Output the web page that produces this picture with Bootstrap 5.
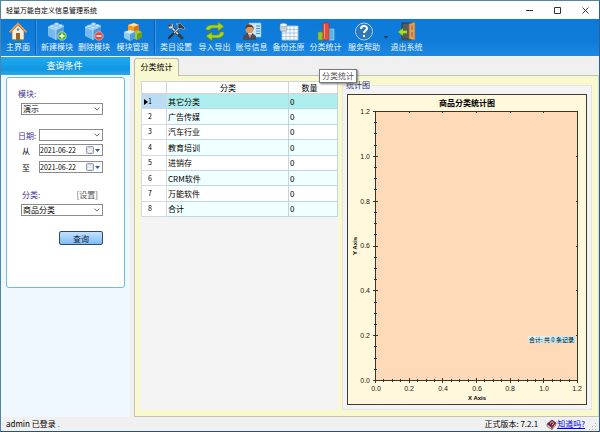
<!DOCTYPE html>
<html lang="zh-CN">
<head>
<meta charset="utf-8">
<meta name="viewport" content="width=device-width, initial-scale=1">
<title>轻量万能自定义信息管理系统</title>
<link href="https://cdn.jsdelivr.net/npm/bootstrap@5.3.0/dist/css/bootstrap.min.css" rel="stylesheet">
<style>
body{font-family:"Noto Sans CJK SC","Liberation Sans",sans-serif;font-size:8px;line-height:12px;color:#000;background:#f0f0f0}
.window{border:1px solid #4f86a4;border-right-color:#2c5f9c;border-bottom-color:#2b5268}
.titlebar{height:18px;background:#fff;padding:0 5px;font-size:7px}
.win-btns{gap:18px;padding-right:4px}
.win-btns button,.tool,.datebox button{border:0;background:none;padding:0;color:inherit;line-height:inherit;font-size:inherit}
.win-btns button{width:10px;height:12px;display:flex;align-items:center;justify-content:center}
.toolbar{height:37px;background:linear-gradient(#0c7ad8,#0f7cda 60%,#1c88e2)}
.tool{height:36px;width:37px;display:flex;flex-direction:column;align-items:center;padding-top:3px;white-space:nowrap;color:#eaf4fe}
.tool svg{width:20px;height:19px;display:block}
.tool-s{width:34px}.tool-l{width:40px}.tool-xl{width:43px}
.vsep{width:2px;background:#0c5fb4;border-right:1px solid #3a97e8;margin:1px 0}
.side{width:129px;background:#eff7ff;padding-top:1px}
.side-title{height:18px;background:linear-gradient(#1eaaf0,#1296e2 70%,#2ba8ee);color:#fff;font-size:9px;line-height:18px;padding-right:2px}
.filter{border:1px solid #6fb9e2;border-radius:3px;background:#fff;margin:2px 5px 0 5px;height:211px;padding:10px 21px 0 11px}
.filter label{color:#43308c;line-height:11px;font-size:8px}
.filter .plain{color:#000;width:21px;padding-left:4px}
.filter .lab{width:21px}
.field,.datebox{height:12px;border:1px solid #8c8c8c;border-radius:0;background-color:#fff;color:#000;font-size:8px;line-height:10px;padding:0 12px 0 1px;min-height:0}
.field{background-position:right 2px center;background-size:6px 6px}
.datebox{padding:0 2px 0 0}
.datebox input{border:0;padding:0;min-width:0;width:42px;font-size:7px;line-height:10px;height:10px;color:#000;outline:0}
.datebox button{height:10px;display:flex;align-items:center}
.mod-sel{margin:4px 0 0 3px;width:82px}
.day-row{margin-top:14px}.date-row{margin-top:3px}.date-row2{margin-top:5px}
.cat-row{margin-top:16px;padding-left:4px;padding-right:5px}
.set-link{color:#555;font-size:8px;line-height:11px}
.cat-sel{margin:4px 0 0 3px;width:82px}
.btn-row{margin-top:15px;line-height:0}
.query-btn{width:44px;height:14px;border:1px solid #33495e;border-radius:2px;padding:0;font-size:8px;line-height:11px;background:linear-gradient(#c4e1fd,#7fbcf8);color:#0c1c30}
.tabs-wrap{padding:2px 0 0 4px;background:#f0f0f0}
.page-tab{height:18px;width:45px;margin-bottom:-1px;border:1px solid #b9b9a8;border-bottom:0;border-radius:3px 3px 0 0;background:#f9f9d0;font-size:8px;line-height:13px;padding:0 0 2px;color:#000;position:relative;z-index:1}
.page{background:#f9f9d0;border:1px solid #c3c3ae;border-right-color:#dcdcc0;padding:5px 6px 6px 5px}
.grid-pane{width:198px;background:#f4f4f4;padding-left:1px}
.grid{width:197px;height:136px;table-layout:fixed;font-size:8px;line-height:11px;border-collapse:collapse;border:1px solid #bfcbd8;background:#fff}
.grid th,.grid td{padding:0 0 0 1px;border:1px solid #bcd6e6;overflow:hidden;white-space:nowrap;vertical-align:middle}
.grid thead th{font-weight:400;text-align:center;height:12px;border-color:#d4d4d4}
.grid tbody th{font-weight:400;font-size:7px;text-align:left;padding-left:6px;border-color:#d4dae0}
.grid tbody tr:nth-child(even) td{background:#f0ffff}
.grid tbody tr.active-row td{background:#afeeee}
.grid tbody tr.active-row th{background:#bcdcf4;padding-left:2px}
.col-no{width:25px}.col-num{width:49px}
.group{background:#f4f4f4;border:1px solid #e4e4e4;margin:4px 0 0 4px;padding:8px 4px 4px}
.group h2{font-size:8px;line-height:10px;margin:-14px 0 0 -1px;color:#27278a;font-weight:400}
.chart{display:block;width:100%;margin-top:4px;background:#fff8dc;border:1px solid #3c3c34}
.tip{position:absolute;left:318px;top:68px;background:#fff;border:1px solid #7a7a7a;box-shadow:1px 1px 2px #777;color:#555;font-size:8px;line-height:12px;padding:0 2px;z-index:5;white-space:nowrap}
.status{height:14px;background:#f0f0f0;padding:0 2px 0 5px;font-size:8px;line-height:14px}
.status a{color:#00e}
</style>
<script src="https://cdn.jsdelivr.net/npm/bootstrap@5.3.0/dist/js/bootstrap.bundle.min.js"></script>
</head>
<body>
<div class="window d-flex flex-column min-vh-100 position-relative">
<header class="titlebar d-flex align-items-center justify-content-between">
  <span>轻量万能自定义信息管理系统</span>
  <div class="win-btns d-flex">
    <button type="button" aria-label="最小化"><svg width="7" height="7" stroke="#333"><path d="M0 3.5h7"/></svg></button>
    <button type="button" aria-label="最大化"><svg width="7" height="7" stroke="#333" fill="none"><path d="M.5.5h6v6h-6z"/></svg></button>
    <button type="button" aria-label="关闭"><svg width="7" height="7" stroke="#333"><path d="M.5.5l6 6M6.500.5l-6 6"/></svg></button>
  </div>
</header>
<svg width="0" height="0" class="position-absolute" aria-hidden="true">
  <symbol id="cube" viewBox="0 0 20 19"><path d="M1 5l9-4 7 3v9l-8 5-8-4z" fill="#75b9ee"/><path d="M1 5l9-4 7 3-8 4z" fill="#b5ddfa"/><path d="M9 8l8-4v9l-8 5z" fill="#4b9ade"/><path d="M1 5l8 3v10M9 8l8-4" fill="none" stroke="#d3ecff" stroke-width=".7"/><g fill="#d3edff" stroke="#62a8df" stroke-width=".6"><ellipse cx="9.500" cy="2" rx="2.300" ry="1.300"/><ellipse cx="5" cy="4.200" rx="2.200" ry="1.300"/><ellipse cx="13.500" cy="3.700" rx="2.200" ry="1.300"/><ellipse cx="9" cy="5.900" rx="2.200" ry="1.300"/></g></symbol>
</svg>
<nav class="toolbar d-flex" aria-label="工具栏">
  <button type="button" class="tool tool-s"><svg viewBox="0 0 20 19"><path d="M4 9v9h12V9l-6-6z" fill="#f8eed6" stroke="#8a6a42" stroke-width=".6"/><path d="M1.500 10.500L10 2l8.500 8.500" fill="none" stroke="#c9823d" stroke-width="2.300"/><path d="M2 9.500L10 1.500l8 8" fill="none" stroke="#f2c689" stroke-width=".8"/><path d="M8 11h4v7H8z" fill="#9d6131"/><circle cx="10" cy="7.500" r="1.300" fill="#518cc5"/><path d="M4 18h12" stroke="#578b35"/></svg>主界面</button>
  <div class="vsep"></div>
  <button type="button" class="tool tool-l"><svg viewBox="0 0 20 19"><use href="#cube"/><circle cx="15" cy="14" r="4.200" fill="#50aa2e" stroke="#d8f1ca" stroke-width=".7"/><path d="M12.500 14h5M15 11.500v5" stroke="#fff" stroke-width="1.500"/></svg>新建模块</button>
  <button type="button" class="tool tool-s"><svg viewBox="0 0 20 19"><use href="#cube"/><circle cx="15" cy="14" r="4.200" fill="#e1483d" stroke="#f8bdb6" stroke-width=".7"/><path d="M12.500 14h5" stroke="#fff" stroke-width="1.600"/></svg>删除模块</button>
  <button type="button" class="tool tool-xl"><svg viewBox="0 0 20 19"><path d="M5 3l6-2 5 2v6l-5 3-6-2z" fill="#f39b27"/><path d="M5 3l6-2 5 2-5 2z" fill="#ffd27e"/><path d="M11 5l5-2v6l-5 3z" fill="#d87516"/><path d="M10 10l5-2 4 2v5l-5 3-4-2z" fill="#9fc73a"/><path d="M14 12l5-2v5l-5 3z" fill="#6b9d20"/><path d="M1 10l6-2 5 2v6l-5 3-6-3z" fill="#91ccf4"/><path d="M1 10l6-2 5 2-5 2z" fill="#d0edff"/><path d="M7 12l5-2v6l-5 3z" fill="#509ede"/><g fill="#ffebbd"><ellipse cx="9" cy="3" rx="1.500" ry=".8"/><ellipse cx="12" cy="2.800" rx="1.500" ry=".8"/></g></svg>模块管理</button>
  <div class="vsep"></div>
  <button type="button" class="tool tool-l"><svg viewBox="0 0 20 19"><path d="M4 4l11 11 1 1" stroke="#353c46" stroke-width="3" stroke-linecap="round"/><path d="M4 4l8 8" stroke="#e1e8ef" stroke-width="1.600"/><path d="M1 4l3 3 3-1V2L5 1l1 3-2 1z" fill="#f3f4f5" stroke="#444" stroke-width=".5"/><path d="M14 5L3 16" stroke="#292e36" stroke-width="2.300" stroke-linecap="round"/><path d="M13 6l-5 5" stroke="#c9d1db" stroke-width="1.300"/><path d="M10 2l4-1 5 5-1.500 2-2-2-2 1-2-2 1-2z" fill="#343c46" stroke="#bac4cd" stroke-width=".6"/></svg>类目设置</button>
  <button type="button" class="tool"><svg viewBox="0 0 20 19"><path d="M1 8c0-4 3-5 7-5h5V0l6 4.500L13 9V6H8C6 6 5 7 5 8z" fill="#a8d51e" stroke="#618a10" stroke-width=".6"/><path d="M19 10c0 4-3 6-7 6H7v3l-6-5 6-4v3h5c2 0 3-1 3-3z" fill="#a8d51e" stroke="#618a10" stroke-width=".6"/></svg>导入导出</button>
  <button type="button" class="tool"><svg viewBox="0 0 20 19"><path d="M7 1h12v14H7z" fill="#c8e8fa" stroke="#80bfea" stroke-width=".6"/><path d="M14 4h4M14 6.500h4M14 9h4M14 11.500h4" stroke="#3f91cf"/><path d="M1 18v-4l4-3h5l4 3v4z" fill="#484e5a"/><path d="M6 11l2 5 2-5z" fill="#fff"/><path d="M8 12v4" stroke="#bd3c28"/><circle cx="7.500" cy="7.300" r="4" fill="#d79a61"/><path d="M3.500 7C3 3 6 2 8 2.500s4 1.500 3.500 5L10 5H6z" fill="#6a3b1d"/></svg>账号信息</button>
  <button type="button" class="tool"><svg viewBox="0 0 20 19"><path d="M3 4h16v14H3z" fill="#fff" stroke="#a9bdce"/><path d="M3 7.500h16M3 11h16M3 14.500h16M7 4v14M11 4v14M15 4v14" stroke="#a1c5df" stroke-width=".9"/><path d="M1 3v5c0 2 7 2 7 0V3z" fill="#c7d0d7" stroke="#7f8f9a" stroke-width=".5"/><ellipse cx="4.500" cy="3" rx="3.500" ry="1.700" fill="#f4f6f8" stroke="#8999a4" stroke-width=".5"/></svg>备份还原</button>
  <button type="button" class="tool"><svg viewBox="0 0 20 19"><path d="M2 10h5v8H2z" fill="#8fc436" stroke="#61951d" stroke-width=".6"/><path d="M13 7h5v11h-5z" fill="#58b4e9" stroke="#b1ddf5" stroke-width=".6"/><path d="M7 1h6v17H7z" fill="#eb4d3d" stroke="#b42c21" stroke-width=".6"/><path d="M8.500 2v15" stroke="#ff9886"/></svg>分类统计</button>
  <button type="button" class="tool tool-l"><svg viewBox="0 0 20 19"><circle cx="10" cy="9.500" r="8.500" fill="#2b78c1" stroke="#a9d0ef"/><path d="M7 7c0-4 6-4 6-.5 0 2-3 2.200-3 4.500" fill="none" stroke="#fff" stroke-width="2"/><circle cx="10" cy="14" r="1.200" fill="#fff"/></svg>服务帮助</button>
  <svg class="align-self-center" width="4" height="3"><path d="M0 0h4L2 2.500z" fill="#06264d"/></svg>
  <button type="button" class="tool"><svg viewBox="0 0 20 19"><path d="M5 1h9v16H5z" fill="#555b61" stroke="#34383d"/><path d="M12 2l6-2v18l-6-1z" fill="#dfa15f" stroke="#a76631" stroke-width=".7"/><path d="M14 4l2-1v5h-2zM14 10h2v5l-2-.5z" fill="#c47c3c"/><path d="M1 10l5-4v2.500h4v3H6V14z" fill="#a8df22" stroke="#578a0b" stroke-width=".5"/><path d="M2 18h12" stroke="#3d4f5d"/></svg>退出系统</button>
</nav>
<div class="d-flex flex-grow-1">
  <aside class="side flex-shrink-0">
    <div class="side-title text-center">查询条件</div>
    <form class="filter" onsubmit="return false">
      <label for="mod" class="d-block">模块:</label>
      <select id="mod" class="field form-select mod-sel"><option>演示</option></select>
      <div class="d-flex align-items-center day-row"><label for="day" class="lab">日期:</label><select id="day" class="field form-select flex-grow-1 w-auto"><option></option></select></div>
      <div class="d-flex align-items-center date-row"><label for="from" class="plain">从</label><div class="datebox d-flex flex-grow-1 justify-content-between"><input id="from" value="2021-06-22"><button type="button" aria-label="选择开始日期"><svg width="14" height="8"><rect x=".5" y=".5" width="7" height="7" rx="1" fill="#dce0ea" stroke="#8f97a8"/><path d="M2 3.500h4M2 5.500h4" stroke="#fff"/><path d="M9 3h5l-2.500 3z" fill="#2e5d9b"/></svg></button></div></div>
      <div class="d-flex align-items-center date-row2"><label for="to" class="plain">至</label><div class="datebox d-flex flex-grow-1 justify-content-between"><input id="to" value="2021-06-22"><button type="button" aria-label="选择结束日期"><svg width="14" height="8"><rect x=".5" y=".5" width="7" height="7" rx="1" fill="#dce0ea" stroke="#8f97a8"/><path d="M2 3.500h4M2 5.500h4" stroke="#fff"/><path d="M9 3h5l-2.500 3z" fill="#2e5d9b"/></svg></button></div></div>
      <div class="d-flex justify-content-between cat-row"><label for="cat">分类:</label><a href="#" class="set-link text-decoration-none">[设置]</a></div>
      <select id="cat" class="field form-select cat-sel"><option>商品分类</option></select>
      <div class="text-end btn-row"><button class="query-btn" type="submit">查询</button></div>
    </form>
  </aside>
  <main class="tabs-wrap flex-grow-1 d-flex flex-column">
    <button type="button" class="page-tab">分类统计</button>
    <section class="page flex-grow-1 d-flex">
      <div class="grid-pane flex-shrink-0">
        <table class="grid">
          <colgroup><col class="col-no"><col><col class="col-num"></colgroup>
          <thead><tr><th scope="col"></th><th scope="col">分类</th><th scope="col" class="pe-2">数量</th></tr></thead>
          <tbody>
            <tr class="active-row"><th scope="row"><svg width="4" height="6"><path d="M0 0l4 3-4 3z"/></svg>1</th><td>其它分类</td><td>0</td></tr>
            <tr><th scope="row">2</th><td>广告传媒</td><td>0</td></tr>
            <tr><th scope="row">3</th><td>汽车行业</td><td>0</td></tr>
            <tr><th scope="row">4</th><td>教育培训</td><td>0</td></tr>
            <tr><th scope="row">5</th><td>进销存</td><td>0</td></tr>
            <tr><th scope="row">6</th><td>CRM软件</td><td>0</td></tr>
            <tr><th scope="row">7</th><td>万能软件</td><td>0</td></tr>
            <tr><th scope="row">8</th><td>合计</td><td>0</td></tr>
          </tbody>
        </table>
      </div>
      <div class="group flex-grow-1">
        <h2>统计图</h2>
        <svg class="chart" viewBox="0 0 238 309" role="img" aria-label="商品分类统计图" font-family="Liberation Sans, sans-serif" font-size="7">
          <defs>
            <linearGradient id="note" x2="1" y2="1"><stop stop-color="#e9f4f4"/><stop offset="1" stop-color="#a4dcec"/></linearGradient>
          </defs>
          <rect x="27.500" y="16.500" width="202" height="269" fill="#ffdab9" stroke="#3c332b"/>
          <g id="ticks" stroke="#3c332b"></g>
          <text x="119" y="11" text-anchor="middle" font-weight="700" font-size="8" font-family="Noto Sans CJK SC, sans-serif">商品分类统计图</text>
          <g text-anchor="end" fill="#222"><text x="22" y="19">1.2</text><text x="22" y="64">1.0</text><text x="22" y="109">0.8</text><text x="22" y="153">0.6</text><text x="22" y="198">0.4</text><text x="22" y="243">0.2</text><text x="22" y="288">0.0</text></g>
          <g text-anchor="middle" fill="#222"><text x="28" y="296">0.0</text><text x="61" y="296">0.2</text><text x="95" y="296">0.4</text><text x="129" y="296">0.6</text><text x="162" y="296">0.8</text><text x="196" y="296">1.0</text><text x="229" y="296">1.2</text></g>
          <text x="129" y="305" text-anchor="middle" font-weight="700" font-size="6">X Axis</text>
          <text transform="translate(9 151) rotate(-90)" text-anchor="middle" font-weight="700" font-size="6">Y Axis</text>
          <rect x="180" y="241" width="47" height="7" fill="url(#note)"/>
          <text x="181" y="247" font-size="6" font-family="Noto Sans CJK SC, sans-serif">合计: 共 0 条记录</text>
        </svg>
      </div>
    </section>
  </main>
</div>
<footer class="status d-flex justify-content-between">
  <span>admin 已登录 <span class="text-primary">.</span></span>
  <span class="d-flex align-items-center"><span class="me-2">正式版本: 7.2.1</span><svg width="11" height="11" viewBox="0 0 11 11"><path d="M1 5l5-4 4 3-4 5z" fill="#7c1d62" stroke="#35102e" stroke-width=".6"/><path d="M1 5l5 4v1.500L1 7.500zM6 9l4-5v2L6 10.500z" fill="#e9dda9" stroke="#56303a" stroke-width=".5"/><path d="M4.500 4.500c0-2 3-2 3 0L6 6" fill="none" stroke="#f0d640"/></svg><a href="#">知道吗?</a><svg class="ms-1 align-self-end" width="8" height="9" fill="#aaa"><path d="M6 1h1v1H6zM6 4h1v1H6zM3 4h1v1H3zM6 7h1v1H6zM3 7h1v1H3zM0 7h1v1H0z"/></svg></span>
</footer>
<div class="tip" role="tooltip">分类统计</div>
</div>
<script>
// Axis ticks: major every 0.2, minor every 0.05, mirrored on the far sides
(function () {
  var d = '';
  for (var i = 0; i <= 24; i++) {
    var major = i % 4 === 0, n = major ? 2 : 1;
    var x = Math.round(27 + i * 202 / 24) + 0.5, y = Math.round(285 - i * 269 / 24) + 0.5;
    d += 'M' + x + ' ' + (285 - n) + 'v' + (2 * n + 1) + 'M' + (27 - n) + ' ' + y + 'h' + (2 * n + 1);
    if (major) d += 'M' + x + ' 16v2M' + 230 + ' ' + y + 'h-2';
  }
  var p = document.createElementNS('http://www.w3.org/2000/svg', 'path');
  p.setAttribute('d', d);
  document.getElementById('ticks').appendChild(p);
})();
</script>
</body>
</html>
